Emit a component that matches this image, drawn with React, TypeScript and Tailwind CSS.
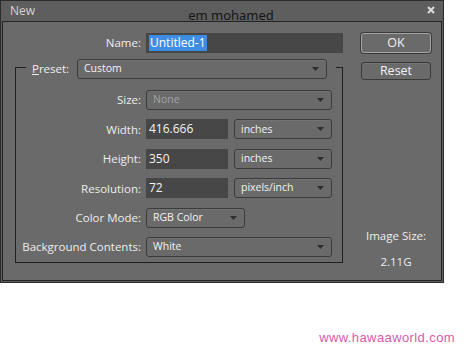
import React from "react";

const Arrow = () => (
  <svg width="7" height="4" viewBox="0 0 7 4">
    <polygon points="0,0 7,0 3.5,4" fill="#2e2e2e" />
  </svg>
);

type SelectProps = { value: string; w: string; disabled?: boolean };

const Select = ({ value, w, disabled }: SelectProps) => (
  <div
    className={`${w} h-[20px] flex items-center justify-between rounded-[3px] border border-[#3b3b3b] pl-[6px] pr-[7px] text-[10.5px] shadow-[inset_0_1px_0_rgba(255,255,255,0.06)]`}
  >
    <span className={disabled ? "text-[#a2a2a2]" : "text-[#f2f2f2]"}>{value}</span>
    <Arrow />
  </div>
);

const Field = ({ value, w }: { value: string; w: string }) => (
  <div className={`${w} h-[20px] flex items-center bg-[#474747] pl-[3px] text-[12px] text-[#f4f4f4]`}>
    {value}
  </div>
);

const Row = ({ label, children }: { label: string; children: React.ReactNode }) => (
  <div className="flex items-center h-[20px]">
    <div className="w-[130px] text-right text-[11.5px] text-[#ededed] pr-[5px]">{label}</div>
    {children}
  </div>
);

const App = () => {
  return (
    <div className="w-[467px] min-h-[350px] bg-white font-['Open_Sans',sans-serif] text-[11px]">
      <div className="w-[444px] h-[283px] border border-[#2c2c2c] bg-[#5e5e5e] flex flex-col">
        {/* title bar */}
        <div className="h-[20px] flex items-center pl-[9px] pr-[8px]">
          <span className="text-[12px] text-[#d2d2d2] w-[25px]">New</span>
          <span className="flex-1 text-center text-[13px] text-[#161616] pt-[9px] leading-none font-['Noto_Sans',sans-serif]">
            em mohamed
          </span>
          <svg width="8" height="8" viewBox="0 0 8 8" className="mb-[2px]">
            <path d="M1 1 L7 7 M7 1 L1 7" stroke="#dcdcdc" strokeWidth="2" />
          </svg>
        </div>

        {/* body */}
        <div className="flex-1 mx-[1px] mb-[1px] border border-[#242424] bg-[#6a6a6a] flex">
          <div className="w-[340px] pl-[12px] pt-[11px]">
            {/* name */}
            <div className="flex items-center h-[20px]">
              <div className="w-[131px] text-right text-[11.5px] text-[#ededed] pr-[5px]">Name:</div>
              <div className="w-[197px] h-[20px] flex items-center bg-[#474747] pl-[3px]">
                <span className="bg-[#3d8ee3] text-white text-[12px] leading-[16px] px-[1px]">Untitled-1</span>
              </div>
            </div>

            {/* preset group */}
            <fieldset className="w-[328px] mt-[3px] border border-[#1f1f1f] px-0 pb-[5px] pt-0 m-0">
              <legend className="ml-[10px] pl-[6px] pr-[9px] pt-[3px] flex items-center">
                <span className="text-[11.5px] text-[#ededed] w-[45px]">
                  <span className="underline">P</span>reset:
                </span>
                <Select value="Custom" w="w-[250px]" />
              </legend>

              <div className="flex flex-col gap-[9.4px] mt-[11px]">
                <Row label="Size:">
                  <Select value="None" w="w-[186px]" disabled />
                </Row>
                <Row label="Width:">
                  <Field value="416.666" w="w-[82px]" />
                  <div className="ml-[6px]">
                    <Select value="inches" w="w-[98px]" />
                  </div>
                </Row>
                <Row label="Height:">
                  <Field value="350" w="w-[82px]" />
                  <div className="ml-[6px]">
                    <Select value="inches" w="w-[98px]" />
                  </div>
                </Row>
                <Row label="Resolution:">
                  <Field value="72" w="w-[82px]" />
                  <div className="ml-[6px]">
                    <Select value="pixels/inch" w="w-[98px]" />
                  </div>
                </Row>
                <Row label="Color Mode:">
                  <Select value="RGB Color" w="w-[99px]" />
                </Row>
                <Row label="Background Contents:">
                  <Select value="White" w="w-[186px]" />
                </Row>
              </div>
            </fieldset>
          </div>

          {/* right column */}
          <div className="ml-[18px] w-[70px] pt-[11px] pb-[10px] flex flex-col">
            <button className="h-[20px] w-[70px] rounded-[3px] border border-[#a4a4a4] text-[12.5px] text-[#f2f2f2] shadow-[0_0_0_1px_#3a3a3a]">
              OK
            </button>
            <button className="mt-[9px] h-[18px] w-[70px] rounded-[3px] border border-[#3a3a3a] text-[12.5px] text-[#f2f2f2] leading-none shadow-[inset_0_1px_0_rgba(255,255,255,0.08)]">
              Reset
            </button>
            <div className="mt-auto flex flex-col items-center text-[11.5px] text-[#ededed]">
              <span>Image Size:</span>
              <span className="mt-[9px]">2.11G</span>
            </div>
          </div>
        </div>
      </div>

      <div className="mt-[45px] pr-[12px] text-right text-[13px] tracking-[0.4px] text-[#d95aab] font-['Liberation_Sans',sans-serif]">
        www.hawaaworld.com
      </div>
    </div>
  );
};

export default App;
